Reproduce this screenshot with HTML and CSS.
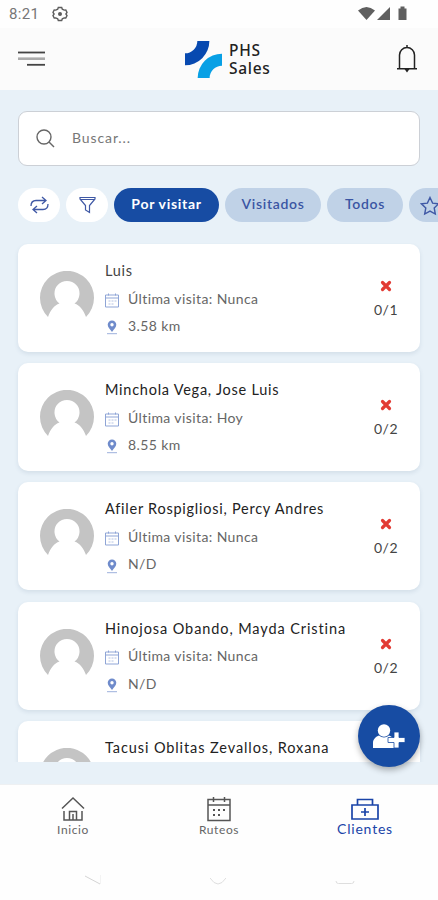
FILE: index.html
```html
<!DOCTYPE html>
<html lang="es">

<head>
  <meta charset="UTF-8" />
  <meta name="viewport" content="width=device-width, initial-scale=1.0" />
  <title>PHS Sales</title>
  <link rel="stylesheet" href="styles.css">
</head>

<body>
  <!-- Shared icons -->
  <svg class="sprite" aria-hidden="true">
    <symbol id="avatar" viewBox="0 0 54 54">
      <path fill="#c4c4c4" d="M8 46A27 27 0 1 1 46 46C43.500 39 40 34.500 34.500 32.500A12.500 12.500 0 1 0 19.500 32.500C14 34.500 10.500 39 8 46Z" />
    </symbol>
    <symbol id="calendar" viewBox="0 0 14 14">
      <path fill="none" stroke="#8fa5d6" d="M.5 1.500h13v12H.5zM.5 4.500h13M3.500 0v2M10.500 0v2" />
      <path fill="none" stroke="#b4c2e3" stroke-dasharray="2 1" d="M3.500 7.500h8M3.500 10.500h5" />
    </symbol>
    <symbol id="pin" viewBox="0 0 14 15">
      <path fill="#6f8bcb" fill-rule="evenodd" d="M7 .5a4.300 4.300 0 0 1 4.300 4.300C11.300 7.500 8.500 9.500 7 12 5.500 9.500 2.700 7.500 2.700 4.800A4.300 4.300 0 0 1 7 .5zM7 3a1.700 1.700 0 1 0 0 3.400A1.700 1.700 0 0 0 7 3z" />
      <path stroke="#9db0dc" d="M2 13.700h10" />
    </symbol>
    <symbol id="cross" viewBox="0 0 12 12">
      <path stroke="#e23b34" stroke-width="3.200" stroke-linecap="round" d="M2.500 2.500l7 7M9.500 2.500l-7 7" />
    </symbol>
  </svg>

  <div class="status-bar">
    <span class="clock">8:21</span>
    <svg class="gear" width="16" height="16" viewBox="0 0 16 16" fill="none" stroke="#5c5c5c" stroke-width="1.400">
      <path d="M6.300 1.500h3.400l.6 1.700 1.900.9 1.600-.1 1.200 2.500-1.100 1.500 1.100 1.500-1.200 2.500-1.600-.1-1.900.9-.6 1.700H6.300l-.6-1.700-1.900-.9-1.600.1L1 9.500 2.100 8 1 6.500 2.200 4l1.600.1 1.900-.9z" />
      <circle cx="8" cy="8" r="2" fill="#5c5c5c" stroke="none" />
    </svg>
    <svg class="signals" width="50" height="16" viewBox="0 0 50 16" fill="#5f5f5f">
      <path d="M0 4.500Q8.500-2.500 17 4.500L8.500 14z" />
      <path d="M32 1v13H19z" />
      <path d="M40.500 2.500h2V.5h4v2h2V14h-8z" />
    </svg>
  </div>

  <header class="header">
    <svg class="menu" width="27" height="16" viewBox="0 0 27 16" stroke-width="1.800">
      <path stroke="#444" d="M0 1.500h27" />
      <path stroke="#aaa" stroke-width="2.600" d="M0 7.700h27" />
      <path stroke="#444" d="M9 13.800h18" />
    </svg>
    <div class="brand">
      <svg width="37" height="37" viewBox="0 0 36 36">
        <path fill="#0749b0" d="M12 0H23.700A23.700 23.700 0 0 1 0 23.700V12A12 12 0 0 0 12 0z" />
        <path fill="#08a0e5" d="M36 12.300V24A12 12 0 0 0 24 36H12.300A23.700 23.700 0 0 1 36 12.300z" />
      </svg>
      <span class="brand-name">PHS<br>Sales</span>
    </div>
    <svg class="bell" width="20" height="28" viewBox="0 0 20 28" fill="none" stroke="#222" stroke-width="1.500">
      <path d="M2.500 23.500V10a7.500 7.500 0 0 1 15 0v13.500M0 23.700h20M10 0v2.500" />
      <path fill="#222" stroke="none" d="M7.500 24h5L10 27.500z" />
    </svg>
  </header>

  <main class="content">
    <div class="search">
      <svg width="19" height="19" viewBox="0 0 19 19" fill="none" stroke="#666" stroke-width="1.400">
        <circle cx="8" cy="8" r="7" />
        <path d="M13 13l5 5" />
      </svg>
      <span>Buscar...</span>
    </div>

    <div class="filters">
      <button class="round">
        <svg width="19" height="18" viewBox="0 0 19 18" fill="none" stroke="#3f58a5" stroke-width="1.300">
          <path d="M1 10C1 6.500 3 4.500 6 4.500h9.500M12 1l4 3.500L12 8M18 8c0 3.500-2 5.500-5 5.500H3.500M7 10l-4 3.500L7 17" />
        </svg>
      </button>
      <button class="round">
        <svg width="17" height="18" viewBox="0 0 17 18" fill="none" stroke="#3f58a5" stroke-width="1.200">
          <path d="M1 1.500h15v1.500L10.500 9.500v7L6.500 14V9.500L1 3zM1.500 3.500h14" />
        </svg>
      </button>
      <button class="chip active">Por visitar</button>
      <button class="chip visited">Visitados</button>
      <button class="chip all">Todos</button>
      <button class="chip star">
        <svg width="20" height="20" viewBox="0 0 20 20" fill="none" stroke="#3f58a5" stroke-width="1.400">
          <path d="M10 1.500l2.600 5.600 6 .7-4.400 4.200 1.100 6-5.300-2.900L4.700 18l1.100-6L1.400 7.800l6-.7z" />
        </svg>
      </button>
    </div>

    <div class="list">
      <div class="card">
        <svg class="avatar"><use href="#avatar" /></svg>
        <div class="info">
          <div class="name muted">Luis</div>
          <div class="row"><svg><use href="#calendar" /></svg>Última visita: Nunca</div>
          <div class="row"><svg><use href="#pin" /></svg>3.58 km</div>
        </div>
        <div class="visits"><svg><use href="#cross" /></svg>0/1</div>
      </div>
      <div class="card">
        <svg class="avatar"><use href="#avatar" /></svg>
        <div class="info">
          <div class="name">Minchola Vega, Jose Luis</div>
          <div class="row"><svg><use href="#calendar" /></svg>Última visita: Hoy</div>
          <div class="row"><svg><use href="#pin" /></svg>8.55 km</div>
        </div>
        <div class="visits"><svg><use href="#cross" /></svg>0/2</div>
      </div>
      <div class="card">
        <svg class="avatar"><use href="#avatar" /></svg>
        <div class="info">
          <div class="name">Afiler Rospigliosi, Percy Andres</div>
          <div class="row"><svg><use href="#calendar" /></svg>Última visita: Nunca</div>
          <div class="row"><svg><use href="#pin" /></svg>N/D</div>
        </div>
        <div class="visits"><svg><use href="#cross" /></svg>0/2</div>
      </div>
      <div class="card">
        <svg class="avatar"><use href="#avatar" /></svg>
        <div class="info">
          <div class="name wide">Hinojosa Obando, Mayda Cristina</div>
          <div class="row"><svg><use href="#calendar" /></svg>Última visita: Nunca</div>
          <div class="row"><svg><use href="#pin" /></svg>N/D</div>
        </div>
        <div class="visits"><svg><use href="#cross" /></svg>0/2</div>
      </div>
      <div class="card">
        <svg class="avatar"><use href="#avatar" /></svg>
        <div class="info">
          <div class="name wide">Tacusi Oblitas Zevallos, Roxana</div>
        </div>
      </div>
    </div>

    <button class="add-client">
      <svg width="32" height="25" viewBox="0 0 32 25" fill="#fff">
        <circle cx="11" cy="6.500" r="6.200" />
        <path d="M0 24v-5c0-4 3-6.500 6-7.500 3 2.500 7 2.500 10 0 3 1 5 3 5 6v6.500z" />
        <path stroke="#174ca3" stroke-width=".8" d="M21 8h5v5.500h6v5h-6V24h-5v-5.500h-6v-5h6z" />
      </svg>
    </button>
  </main>

  <nav class="tabs">
    <a class="tab">
      <svg width="24" height="26" viewBox="0 0 24 26" fill="none" stroke="#555" stroke-width="1.500">
        <path d="M1 12.500L12 2l11 10.500M3 15v9h18v-9M8.500 24v-8.500h7V24M12 18v6" />
      </svg>
      Inicio
    </a>
    <a class="tab">
      <svg width="24" height="26" viewBox="0 0 24 26" fill="none" stroke="#555" stroke-width="1.500">
        <path d="M1 3.500h22v21H1zM1 9h22M6.500 1v5M17.500 1v5" />
        <path stroke-width="2" stroke-dasharray="2 3" d="M6 14h12M6 19h8" />
      </svg>
      Ruteos
    </a>
    <a class="tab selected">
      <svg width="28" height="22" viewBox="0 0 28 22" fill="none" stroke="#1a44a8" stroke-width="1.700">
        <path d="M1 7h26v14H1zM6.500 7V1.500h15V7M14 10v8M10 14h8" />
      </svg>
      Clientes
    </a>
  </nav>

  <div class="system-nav">
    <svg width="16" height="10" viewBox="0 0 16 10" fill="none" stroke="#d4d4d4"><path d="M0 1l15 8" /><path stroke="#f3f3f3" d="M15.500 0v9" /></svg>
    <svg width="16" height="10" viewBox="0 0 16 10" fill="none" stroke="#dedede"><path d="M0 3q8 12 16 0" /></svg>
    <svg width="20" height="10" viewBox="0 0 20 10" fill="none" stroke="#dedede"><path d="M1 6q0 2.500 2.500 2.500h13Q19 8.500 19 6" /></svg>
  </div>
</body>

</html>
```
FILE: styles.css
```css
* {
  box-sizing: border-box;
}

body {
  margin: 0;
  height: 900px;
  display: flex;
  flex-direction: column;
  overflow: hidden;
  background: #fefefe;
  font-family: Lato, sans-serif;
  font-size: 14px;
  color: #666;
}

button {
  border: 0;
  padding: 0;
  font: inherit;
}

svg {
  display: block;
  flex: none;
}

.sprite {
  position: absolute;
  width: 0;
  height: 0;
}

.status-bar {
  height: 28px;
  display: flex;
  align-items: center;
  padding: 0 30px 0 9px;
}

.clock {
  font-family: Roboto, sans-serif;
  font-size: 15px;
  letter-spacing: 0.3px;
  color: #777;
}

.gear {
  margin-left: 13px;
}

.signals {
  margin-left: auto;
}

.header {
  height: 62px;
  display: flex;
  align-items: center;
  padding: 0 21px 0 18px;
  background: #fbfbfb;
}

.brand {
  display: flex;
  gap: 7px;
  align-items: center;
  margin-left: 140px;
}

.bell {
  margin-left: auto;
}

.brand-name {
  font-family: "Noto Sans", sans-serif;
  font-size: 15.5px;
  font-weight: 500;
  line-height: 18px;
  letter-spacing: 0.7px;
  color: #222;
}

.content {
  position: relative;
  height: 694px;
  padding: 21px 18px 22px;
  display: flex;
  flex-direction: column;
  background: #e8f1f8;
}

.search {
  height: 55px;
  flex: none;
  display: flex;
  align-items: center;
  gap: 17px;
  padding: 0 0 1px 17px;
  background: #fff;
  border: 1px solid #ccd0d6;
  border-radius: 9px;
  letter-spacing: 0.9px;
  color: #777;
}

.search span {
  margin-top: -2px;
}

.filters {
  display: flex;
  flex: none;
  gap: 6px;
  margin: 22px -18px 21px 0;
  overflow: hidden;
}

.round,
.chip {
  height: 34px;
  flex: none;
  display: flex;
  align-items: center;
  justify-content: center;
  border-radius: 17px;
}

.round {
  width: 42px;
  background: #fff;
}

.chip {
  padding-bottom: 3px;
  background: #c0d2e7;
  color: #3a55a3;
  font-weight: 600;
  letter-spacing: 0.7px;
}

.active {
  width: 105px;
  background: #174ca3;
  color: #fff;
  font-weight: 700;
}

.visited {
  width: 96px;
}

.all {
  width: 76px;
}

.star {
  width: 60px;
  justify-content: flex-start;
  padding: 2px 0 0 11px;
}

.list {
  flex: 1;
  min-height: 0;
  margin: 0 -18px;
  padding: 1px 18px 0;
  overflow: hidden;
}

.card {
  height: 108px;
  margin-bottom: 11.2px;
  display: flex;
  padding: 13px 22px 0;
  background: #fff;
  border-radius: 10px;
  box-shadow: 0 2px 4px rgba(60, 90, 120, 0.12);
}

.avatar {
  width: 54px;
  height: 54px;
  margin-top: 14px;
}

.info {
  margin-left: 11px;
  line-height: 27.5px;
  letter-spacing: 0.4px;
  white-space: nowrap;
}

.name {
  color: #222;
  font-size: 14.5px;
  letter-spacing: 0.75px;
}

.wide {
  letter-spacing: 0.9px;
}

.muted {
  color: #444;
}

.row {
  display: flex;
  align-items: center;
  gap: 9px;
}

.row svg {
  width: 14px;
  height: 15px;
  margin-top: 4px;
}

.visits {
  width: 24px;
  margin: 23px 0 0 auto;
  display: flex;
  flex-direction: column;
  align-items: center;
  gap: 9px;
  line-height: 18px;
  letter-spacing: 0.5px;
  color: #444;
}

.visits svg {
  width: 12px;
  height: 12px;
}

.add-client {
  position: absolute;
  right: 18px;
  bottom: 17px;
  width: 62px;
  height: 62px;
  display: flex;
  align-items: center;
  justify-content: center;
  border-radius: 50%;
  background: #174ca3;
  box-shadow: 0 3px 6px rgba(0, 0, 0, 0.3);
}

.tabs {
  height: 76px;
  display: flex;
  padding-top: 11px;
  border-top: 1px solid #eef0f2;
}

.tab {
  flex: 1;
  display: flex;
  flex-direction: column;
  align-items: center;
  font-size: 12px;
  line-height: 15px;
  letter-spacing: 0.6px;
}

.selected {
  padding-top: 2px;
  font-size: 14px;
  line-height: 17px;
  letter-spacing: 0.8px;
  color: #1a44a8;
}

.system-nav {
  display: flex;
  justify-content: space-between;
  padding: 15px 83px 0 85px;
}
```
